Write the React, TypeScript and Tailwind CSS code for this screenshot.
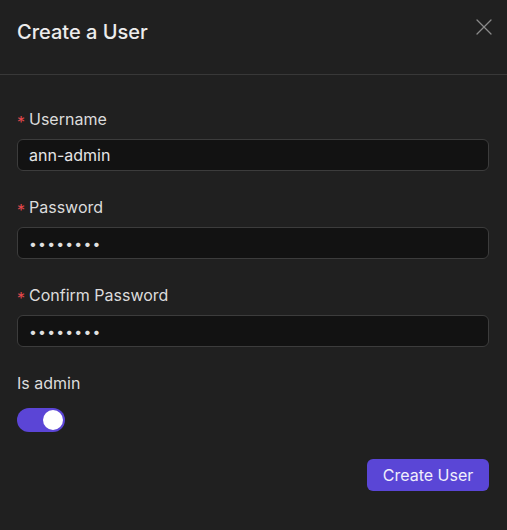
import { X } from 'lucide-react'

const fields = [
  { label: 'Username', value: 'ann-admin', secret: false },
  { label: 'Password', value: '••••••••', secret: true },
  { label: 'Confirm Password', value: '••••••••', secret: true },
]

export default function App() {
  return (
    <div className="w-[507px] h-[530px] bg-[#202020] text-[#e6e6e6]" style={{ fontFamily: 'Inter, "Noto Sans", sans-serif' }}>
      {/* Header */}
      <div className="flex items-start justify-between pl-[17px] pr-[9px] pt-[18px] h-[75px] border-b border-[#383838]">
        <h2 className="text-[20px] leading-[28px] font-medium text-[#ececec]">Create a User</h2>
        <X size={28} strokeWidth={1.1} className="mt-[-5px] text-[#8a8a8a]" />
      </div>

      {/* Body */}
      <div className="px-[17px] pt-[32px]">
        {fields.map((f) => (
          <div key={f.label} className="mb-[24px]">
            <label className="flex items-center text-[16px] leading-[24px] text-[#dcdcdc]">
              <span className="mr-[4px] mt-[6px] text-[16px] leading-none text-[#e5484d]">*</span>
              {f.label}
            </label>
            <div className="mt-[8px] h-[32px] w-[472px] rounded-[6px] border border-[#3c3c3c] bg-[#121212] px-[11px] flex items-center">
              {f.secret ? (
                <span className="text-[14px] tracking-[1.2px] text-[#e0e0e0]">{f.value}</span>
              ) : (
                <span className="text-[16px] text-[#e6e6e6]">{f.value}</span>
              )}
            </div>
          </div>
        ))}

        <div className="text-[16px] leading-[24px] text-[#dcdcdc]">Is admin</div>
        <div className="mt-[13px] w-[48px] h-[24px] rounded-full bg-[#5b45d6] flex items-center justify-end pr-[2px]">
          <div className="w-[20px] h-[20px] rounded-full bg-white" />
        </div>

        <div className="flex justify-end mt-[27px]">
          <button className="h-[32px] w-[122px] mr-[1px] rounded-[6px] bg-[#5a46d6] text-[16px] text-[#f0eefc]">Create User</button>
        </div>
      </div>
    </div>
  )
}
